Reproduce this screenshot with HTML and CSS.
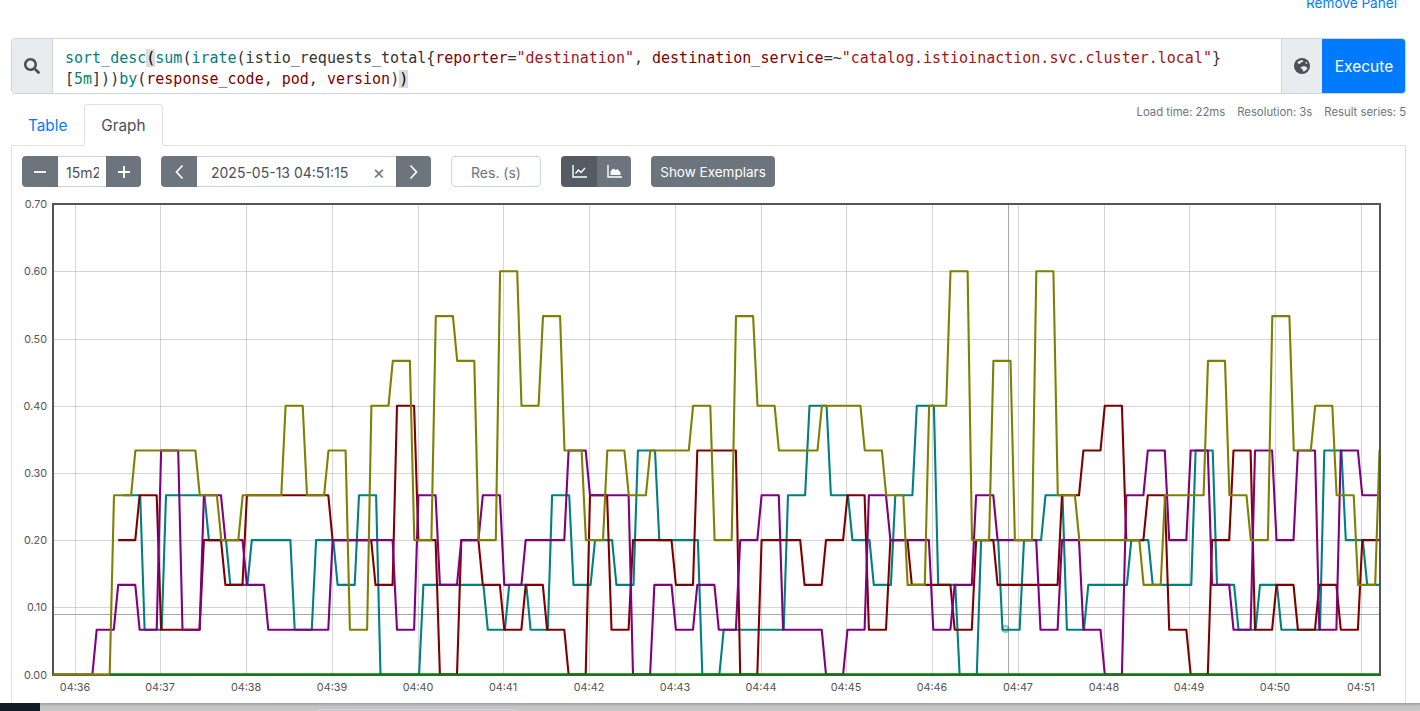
FILE: index.html
```html
<!DOCTYPE html>
<html lang="en">
<head>
<meta charset="utf-8">
<title>Prometheus Graph</title>
<link rel="stylesheet" href="styles.css">
</head>
<body>
<div class="page">
  <div class="panel-head"><a class="remove-link" href="#">Remove Panel</a></div>

  <div class="query-box">
    <div class="addon addon-search">
      <svg class="icon-search" viewBox="0 0 512 512"><path d="M505 442.7L405.3 343c-4.5-4.5-10.6-7-17-7H372c27.6-35.3 44-79.7 44-128C416 93.1 322.9 0 208 0S0 93.1 0 208s93.1 208 208 208c48.3 0 92.7-16.4 128-44v16.3c0 6.4 2.5 12.5 7 17l99.7 99.7c9.4 9.4 24.6 9.4 33.9 0l28.3-28.3c9.4-9.4 9.4-24.6.1-34zM208 336c-70.7 0-128-57.2-128-128 0-70.7 57.2-128 128-128 70.7 0 128 57.2 128 128 0 70.7-57.2 128-128 128z"/></svg>
    </div>
    <div class="editor">
      <div class="code-line"><span class="fn">sort_desc</span><span class="match">(</span><span class="fn">sum</span>(<span class="fn">irate</span>(istio_requests_total{<span class="lbl">reporter</span>=<span class="str">"destination"</span>, <span class="lbl">destination_service</span>=~<span class="str">"catalog.istioinaction.svc.cluster.local"</span>}</div>
      <div class="code-line">[<span class="dur">5m</span>]))<span class="fn">by</span>(<span class="lbl">response_code</span>, <span class="lbl">pod</span>, <span class="lbl">version</span>)<span class="match">)</span></div>
    </div>
    <div class="addon addon-globe">
      <svg class="icon-globe" viewBox="0 0 16 16">
        <circle cx="8" cy="8" r="8" fill="#495057"/>
        <path d="M3.2 4.6C4.4 2.9 6.6 1.9 8.6 2.3c.9.2 1.1 1 .4 1.5-.8.5-1.6.3-2.3.9-.6.5-.5 1.2-1.2 1.3-.9.1-1.3-.4-2.3-1.4z" fill="#e9ecef"/>
        <path d="M6.8 9.3c1.2-1 3-1.2 4.5-.9 1 .2 1.5.7 1.9 1.4.3.6-.1 1.2-.6 1.7-.8.8-1.7 1.8-2.9 1.9-.7 0-.9-.6-.9-1.2 0-.8-.5-1.1-1.2-1.4-.7-.3-1.3-.9-.8-1.5z" fill="#e9ecef"/>
        <path d="M12 3.7c.7.6 1.3 1.4 1.6 2.3l-1.5-.3-.9-1.2z" fill="#e9ecef"/>
      </svg>
    </div>
    <button class="execute" type="button">Execute</button>
  </div>

  <div class="tabs-row">
    <div class="tabs">
      <a class="tab" href="#">Table</a>
      <a class="tab tab-active" href="#">Graph</a>
    </div>
    <div class="stats">
      <span>Load time: 22ms</span>
      <span>Resolution: 3s</span>
      <span>Result series: 5</span>
    </div>
  </div>

  <div class="tab-content">
    <div class="toolbar">
      <div class="group">
        <button class="btn btn-lead btn-left" type="button"><svg class="glyph" viewBox="0 0 12 12"><path d="M0 6h12"/></svg></button>
        <input class="field field-range" type="text" value="15m26s">
        <button class="btn btn-tail btn-right" type="button"><svg class="glyph" viewBox="0 0 12 12"><path d="M0 6h12M6 0v12"/></svg></button>
      </div>
      <div class="group">
        <button class="btn btn-lead btn-left" type="button"><svg class="chev" viewBox="0 0 9 16"><path d="M7.5 1.5 1.5 8l6 6.5"/></svg></button>
        <div class="date-box"><span class="date-text">2025-05-13 04:51:15</span><span class="clear">×</span></div>
        <button class="btn btn-tail btn-right" type="button"><svg class="chev" viewBox="0 0 9 16"><path d="M1.5 1.5 7.5 8l-6 6.5"/></svg></button>
      </div>
      <input class="field field-res" type="text" placeholder="Res. (s)">
      <div class="group">
        <button class="btn btn-lead btn-left btn-dark" type="button">
          <svg class="type-icon" viewBox="0 0 15 13"><path class="stroke" d="M1 0v12h14"/><path class="stroke" d="M3.5 8.5 6.5 5l2.5 2.5L13 3"/></svg>
        </button>
        <button class="btn btn-type2 btn-right" type="button">
          <svg class="type-icon" viewBox="0 0 15 13"><path class="stroke" d="M1 0v12h14"/><path class="fill" d="M3.5 10V6.5L6 3.5l3 1.5 1.5-1 3 3.5V10z"/></svg>
        </button>
      </div>
      <button class="btn btn-exemplars" type="button">Show Exemplars</button>
    </div>
    <svg id="chart" class="chart" viewBox="12 187 1393 516"></svg>
  </div>

  <div class="os-bar"><div class="os-dark"></div><div class="os-pill"></div></div>
</div>
<script src="chart.js"></script>
</body>
</html>
```

FILE: styles.css
```css
* { box-sizing: border-box; }
html, body { margin: 0; padding: 0; background: #fff; }
body { font-family: Inter, "Liberation Sans", sans-serif; font-size: 16px; color: #212529; }
.page { position: relative; width: 1420px; height: 711px; overflow: hidden; padding: 0 14px 0 11px; }

.panel-head { height: 38px; display: flex; justify-content: flex-end; padding-right: 9px; }
.remove-link { color: #007bff; text-decoration: none; font-size: 13.6px; line-height: 16px; margin-top: -5px; }

.query-box { display: flex; height: 56px; border: 1px solid #ced4da; border-radius: 4px; overflow: hidden; }
.addon { background: #e9ecef; display: flex; align-items: center; justify-content: center; flex: none; }
.addon-search { width: 41px; border-right: 1px solid #ced4da; }
.addon-globe { width: 41px; border-left: 1px solid #ced4da; }
.icon-search { width: 16px; height: 16px; fill: #495057; }
.icon-globe { width: 16px; height: 16px; }
.editor { flex: 1; padding: 8.5px 12px 0; font-family: "DejaVu Sans Mono", monospace; font-size: 15px; line-height: 21px; color: #333; overflow: hidden; }
.code-line { height: 21px; white-space: pre; }
.fn { color: #008080; }
.lbl { color: #800000; }
.str { color: #a31515; }
.dur { color: #09885a; }
.match { background: #ddd; color: #000; }
.execute { flex: none; width: 84px; margin: -1px -1px -1px 0; border: 0; background: #007bff; color: #fff; font: 15.5px Inter, sans-serif; }

.tabs-row { display: flex; justify-content: space-between; align-items: flex-start; margin-top: 10px; }
.tabs { display: flex; padding-left: 0; margin-bottom: -1px; position: relative; z-index: 1; }
.tab { height: 42px; padding: 0 16px; line-height: 42px; border: 1px solid transparent; border-radius: 4px 4px 0 0; color: #007bff; text-decoration: none; font-size: 15.3px; }
.tab-active { color: #495057; background: #fff; border-color: #dee2e6 #dee2e6 #fff; }
.stats { display: flex; gap: 12px; font-size: 11.3px; line-height: 16px; color: #6c757d; }

.tab-content { border: 1px solid #dee2e6; height: 600px; }
.toolbar { display: flex; gap: 20px; padding: 10px 10px 0; height: 41px; }
.group { display: flex; }
.btn { height: 31px; border: 0; background: #6c757d; color: #fff; border-radius: 4px; font: 13.5px/31px Inter, sans-serif; padding: 0; display: flex; align-items: center; justify-content: center; }
.btn-left { border-radius: 4px 0 0 4px; }
.btn-right { border-radius: 0 4px 4px 0; }
.btn-lead { width: 36px; }
.btn-tail { width: 35px; }
.btn-type2 { width: 34px; }
.btn-dark { background: #545b62; }
.btn-exemplars { width: 124px; padding-top: 1px; }
.glyph { width: 12px; height: 12px; fill: none; stroke: #fff; stroke-width: 1.8; }
.chev { width: 9px; height: 16px; fill: none; stroke: #fff; stroke-width: 1.7; }
.type-icon { width: 15px; height: 13px; }
.stroke { fill: none; stroke: #fff; stroke-width: 1.4; }
.fill { fill: #fff; }

.field { height: 31px; border: 1px solid #ced4da; color: #495057; font: 14px Inter, sans-serif; background: #fff; outline: 0; }
.field::placeholder { color: #6c757d; opacity: 1; }
.field-range { width: 48px; padding: 1px 7px 0 8px; border-width: 1px 0; }
.date-box { width: 199px; height: 31px; border: solid #ced4da; border-width: 1px 0; display: flex; align-items: center; justify-content: space-between; padding: 1px 11px 0 14px; font-size: 14px; color: #495057; }
.clear { color: #6c757d; font-size: 19px; line-height: 1; }
.field-res { width: 90px; border-radius: 4px; text-align: center; padding: 1px 8px 0; }

.chart { display: block; width: 1393px; height: 516px; }
.grid-line { stroke: #545454; stroke-opacity: .24; stroke-width: 1; shape-rendering: crispEdges; }
.cross { stroke: #a8a8a8; stroke-width: 1; shape-rendering: crispEdges; }
.frame { fill: none; stroke: #545454; stroke-width: 2; shape-rendering: crispEdges; }
.series { fill: none; stroke-width: 2.1; stroke-linejoin: round; }
.marker { fill: none; stroke: #008080; stroke-opacity: .45; stroke-width: 2; }
.tick { font-family: Inter, "Liberation Sans", sans-serif; font-size: 10.8px; fill: #545454; }

.os-bar { position: absolute; left: 0; right: 0; bottom: 0; height: 8px; background: linear-gradient(#9f9f9f, #c2c2c2 40%, #c8c8c8); display: flex; }
.os-dark { width: 40px; background: #121c26; }
.os-pill { width: 198px; margin: 6px 0 0 277px; border: 1px solid #d2d2da; border-bottom: 0; border-radius: 3px 3px 0 0; }
```

FILE: chart.js
```js
(function () {
  var NS = 'http://www.w3.org/2000/svg';
  var svg = document.getElementById('chart');
  var X0 = 53, X1 = 1380, YTOP = 204, ZERO = 674.5, LEVEL = 44.8, GRID_Y = 67.2;
  var PERIOD = 21.45, PLATEAU = 17.1;

  function el(name, attrs, text) {
    var node = document.createElementNS(NS, name);
    for (var key in attrs) node.setAttribute(key, attrs[key]);
    if (text) node.textContent = text;
    svg.appendChild(node);
    return node;
  }

  var defs = el('defs', {});
  var clip = document.createElementNS(NS, 'clipPath');
  clip.setAttribute('id', 'plot');
  var rect = document.createElementNS(NS, 'rect');
  rect.setAttribute('x', X0);
  rect.setAttribute('y', YTOP);
  rect.setAttribute('width', X1 - X0 + 1);
  rect.setAttribute('height', 472);
  clip.appendChild(rect);
  defs.appendChild(clip);

  // grid: vertical lines and time labels
  for (var i = 0; i <= 15; i++) {
    var gx = Math.round(74.5 + 85.76 * i) + 0.5;
    el('line', { 'class': 'grid-line', x1: gx, x2: gx, y1: YTOP, y2: 675 });
    var m = 36 + i;
    el('text', { 'class': 'tick', x: gx - 0.5, y: 691, 'text-anchor': 'middle' }, '04:' + m);
  }
  // grid: horizontal lines and value labels
  for (var v = 0; v <= 7; v++) {
    var gy = Math.round(ZERO - GRID_Y * v) + 0.5;
    if (v > 0 && v < 7) el('line', { 'class': 'grid-line', x1: X0, x2: X1, y1: gy, y2: gy });
    el('text', { 'class': 'tick', x: 47, y: ZERO - GRID_Y * v + 4, 'text-anchor': 'end' }, '0.' + v + '0');
  }

  // hover crosshair
  el('line', { 'class': 'cross', x1: X0, x2: X1, y1: 614.5, y2: 614.5 });
  el('line', { 'class': 'cross', x1: 1008.5, x2: 1008.5, y1: YTOP, y2: 674 });

  function series(color, phase, first, levels, lead) {
    var pts = lead ? lead.slice() : [];
    levels.forEach(function (lvl, idx) {
      var start = phase + PERIOD * (first + idx);
      var y = (ZERO - LEVEL * lvl).toFixed(1);
      pts.push(start.toFixed(1) + ',' + y);
      pts.push((start + PLATEAU).toFixed(1) + ',' + y);
    });
    el('polyline', { 'class': 'series', stroke: color, points: pts.join(' '), 'clip-path': 'url(#plot)' });
  }

  var teal = [4,1,4,4,3,2,3,3,1,3,2,4,0,0,2,2,2,1,2,1,4,2,3,2,5,3,3,0,1,1,1,4,6,4,3,2,4,6,2,0,3,1,3,4,1,2,2,3,2,2,5,2,1,2,1,1,5,3,2];
  var red = [3,4,1,1,3,2,4,4,4,4,3,3,2,6,3,0,3,2,1,2,1,0,4,1,3,3,2,5,5,0,3,3,2,3,4,1,3,2,2,1,3,2,2,2,4,5,6,3,4,1,0,3,5,1,2,1,2,1,3];
  var purple = [1,2,1,5,1,4,3,2,1,1,1,3,3,3,1,4,2,3,4,2,3,3,5,4,4,0,2,1,2,1,3,4,1,1,0,1,4,3,3,1,2,4,3,3,1,3,1,0,4,5,3,5,2,1,5,3,5,1,5,4,4];
  var olive = [4,5,5,5,4,3,4,4,6,4,5,1,6,7,3,8,7,3,9,6,8,5,3,5,4,5,5,6,3,8,6,5,5,6,6,5,4,2,6,9,3,7,3,9,4,3,3,3,2,4,4,7,4,3,8,5,6,4,2,5,5];

  el('line', { stroke: '#008000', 'stroke-width': 2, x1: 110, x2: X1, y1: ZERO, y2: ZERO });
  series('#008080', 101.65, 1, teal);
  series('#800000', 96.7, 1, red);
  series('#800080', 96.7, 0, purple, [X0 + ',' + ZERO, '92.4,' + ZERO]);
  series('#808000', 114, 0, olive, [X0 + ',' + ZERO, '109.7,' + ZERO]);

  el('circle', { 'class': 'marker', cx: 1005.5, cy: 629, r: 3 });
  el('rect', { 'class': 'frame', x: X0, y: YTOP, width: X1 - X0, height: 471 });
  // zero series and olive lie on top of the frame's lower edge
  el('line', { stroke: '#008000', 'stroke-width': 2, x1: 110, x2: X1, y1: ZERO, y2: ZERO });
  el('line', { stroke: '#808000', 'stroke-width': 2, x1: X0, x2: 110, y1: ZERO, y2: ZERO });
})();
```
